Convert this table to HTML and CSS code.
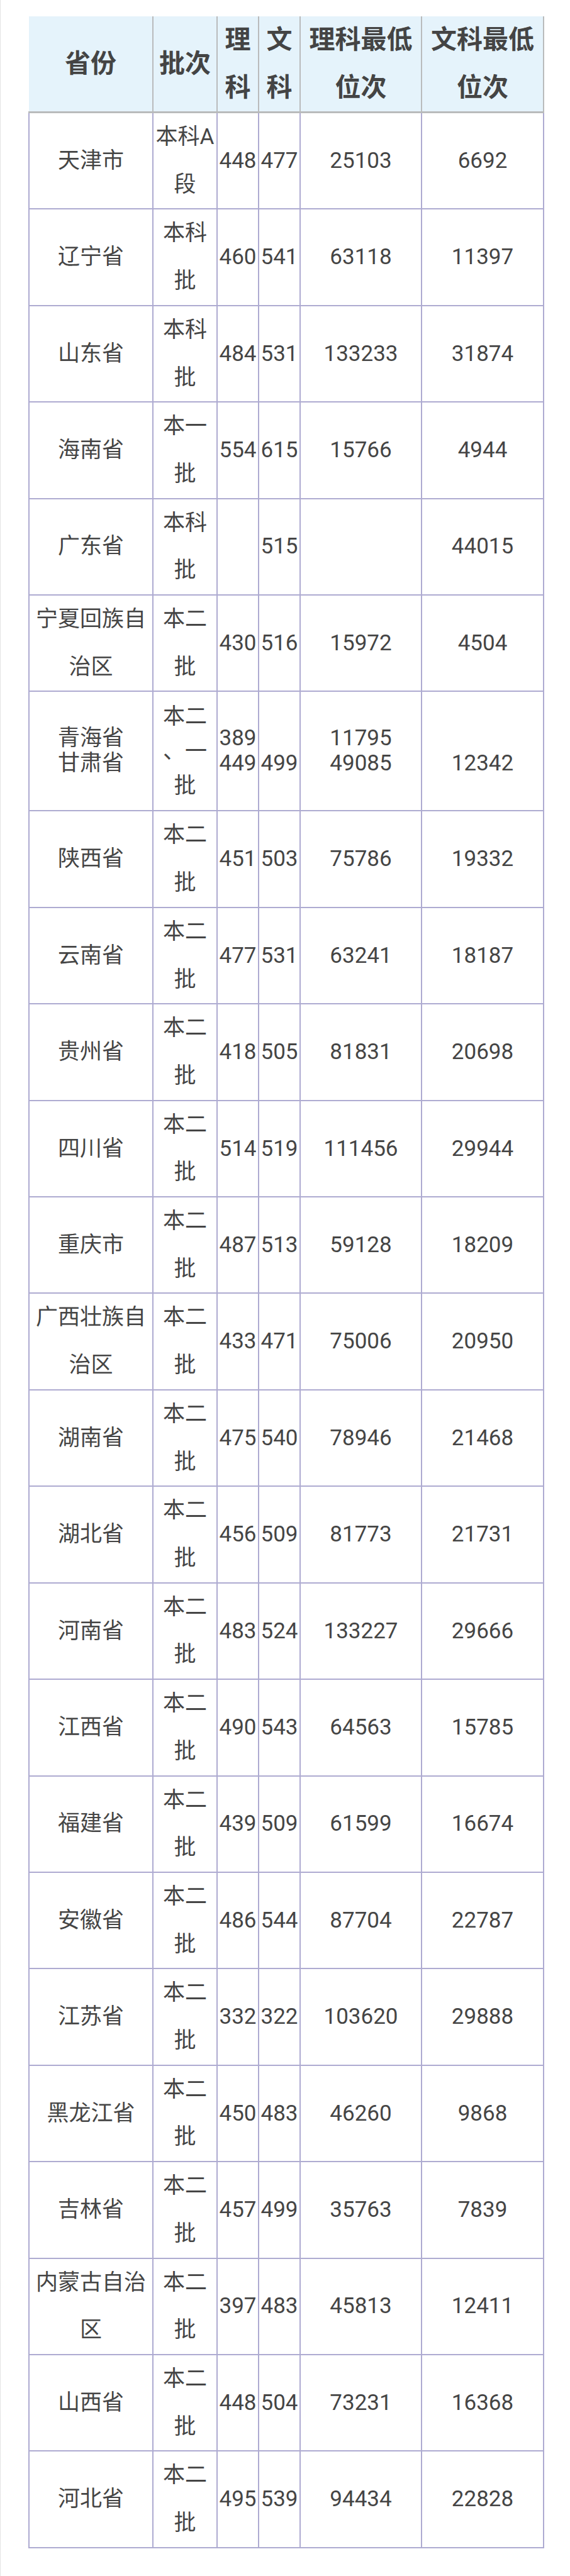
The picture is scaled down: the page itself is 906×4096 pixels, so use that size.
FILE: index.html
```html
<!DOCTYPE html>
<html lang="zh-CN">
<head>
<meta charset="utf-8">
<title>各省录取分数</title>
<link rel="stylesheet" href="styles.css">
</head>
<body>
<div class="page">
<table class="scores">
<colgroup>
<col class="c-prov"><col class="c-batch"><col class="c-num"><col class="c-num"><col class="c-rank"><col class="c-rank2">
</colgroup>
<thead>
<tr><th class="first">省份</th><th>批次</th><th>理科</th><th>文科</th><th>理科最低位次</th><th>文科最低位次</th></tr>
</thead>
<tbody>
<tr><td>天津市</td><td>本科A段</td><td>448</td><td>477</td><td>25103</td><td>6692</td></tr>
<tr><td>辽宁省</td><td>本科批</td><td>460</td><td>541</td><td>63118</td><td>11397</td></tr>
<tr><td>山东省</td><td>本科批</td><td>484</td><td>531</td><td>133233</td><td>31874</td></tr>
<tr><td>海南省</td><td>本一批</td><td>554</td><td>615</td><td>15766</td><td>4944</td></tr>
<tr><td>广东省</td><td>本科批</td><td></td><td>515</td><td></td><td>44015</td></tr>
<tr><td>宁夏回族自治区</td><td>本二批</td><td>430</td><td>516</td><td>15972</td><td>4504</td></tr>
<tr class="tall">
<td><div class="stack"><div>青海省</div><div>甘肃省</div></div></td>
<td><div class="batch3">本二<br>、一<br>批</div></td>
<td><div class="stack"><div>389</div><div>449</div></div></td>
<td><div class="stack"><div>&nbsp;</div><div>499</div></div></td>
<td><div class="stack"><div>11795</div><div>49085</div></div></td>
<td><div class="stack"><div>&nbsp;</div><div>12342</div></div></td>
</tr>
<tr><td>陕西省</td><td>本二批</td><td>451</td><td>503</td><td>75786</td><td>19332</td></tr>
<tr><td>云南省</td><td>本二批</td><td>477</td><td>531</td><td>63241</td><td>18187</td></tr>
<tr><td>贵州省</td><td>本二批</td><td>418</td><td>505</td><td>81831</td><td>20698</td></tr>
<tr><td>四川省</td><td>本二批</td><td>514</td><td>519</td><td>111456</td><td>29944</td></tr>
<tr><td>重庆市</td><td>本二批</td><td>487</td><td>513</td><td>59128</td><td>18209</td></tr>
<tr><td>广西壮族自治区</td><td>本二批</td><td>433</td><td>471</td><td>75006</td><td>20950</td></tr>
<tr><td>湖南省</td><td>本二批</td><td>475</td><td>540</td><td>78946</td><td>21468</td></tr>
<tr><td>湖北省</td><td>本二批</td><td>456</td><td>509</td><td>81773</td><td>21731</td></tr>
<tr><td>河南省</td><td>本二批</td><td>483</td><td>524</td><td>133227</td><td>29666</td></tr>
<tr><td>江西省</td><td>本二批</td><td>490</td><td>543</td><td>64563</td><td>15785</td></tr>
<tr><td>福建省</td><td>本二批</td><td>439</td><td>509</td><td>61599</td><td>16674</td></tr>
<tr><td>安徽省</td><td>本二批</td><td>486</td><td>544</td><td>87704</td><td>22787</td></tr>
<tr><td>江苏省</td><td>本二批</td><td>332</td><td>322</td><td>103620</td><td>29888</td></tr>
<tr><td>黑龙江省</td><td>本二批</td><td>450</td><td>483</td><td>46260</td><td>9868</td></tr>
<tr><td>吉林省</td><td>本二批</td><td>457</td><td>499</td><td>35763</td><td>7839</td></tr>
<tr><td>内蒙古自治区</td><td>本二批</td><td>397</td><td>483</td><td>45813</td><td>12411</td></tr>
<tr><td>山西省</td><td>本二批</td><td>448</td><td>504</td><td>73231</td><td>16368</td></tr>
<tr><td>河北省</td><td>本二批</td><td>495</td><td>539</td><td>94434</td><td>22828</td></tr>
</tbody>
</table>
</div>
</body>
</html>
```
FILE: styles.css
```css
html, body {
  margin: 0;
  padding: 0;
  background: #ffffff;
}

body {
  font-family: Roboto, "Noto Sans CJK SC", sans-serif;
  color: #454545;
}

.page {
  box-sizing: border-box;
  min-height: 4096px;
  border-left: 1px solid #e3e3e3;
  padding: 26px 0 0 44px;
}

.scores {
  border-collapse: collapse;
  table-layout: fixed;
  width: 818px;
}

.c-prov { width: 197px; }
.c-batch { width: 102px; }
.c-num { width: 66px; }
.c-rank { width: 193px; }
.c-rank2 { width: 194px; }

.scores th {
  background: #e5f3fb;
  font-weight: bold;
  font-size: 41px;
  line-height: 75.5px;
  color: #444444;
  text-align: center;
  vertical-align: middle;
  padding: 0 2px;
  border-left: 2px solid #b9bbbc;
  border-right: 2px solid #b9bbbc;
  border-top: none;
  border-bottom: 3px solid #b9bbbc;
}

.scores th.first {
  border-left: none;
}

.scores td {
  font-size: 35px;
  line-height: 75.7px;
  text-align: center;
  vertical-align: middle;
  padding: 0 2px;
  border: 2px solid #aeabd1;
}

.scores tr.tall td {
  height: 188px;
}

.stack {
  line-height: 40px;
}

.batch3 {
  line-height: 55px;
}
```
